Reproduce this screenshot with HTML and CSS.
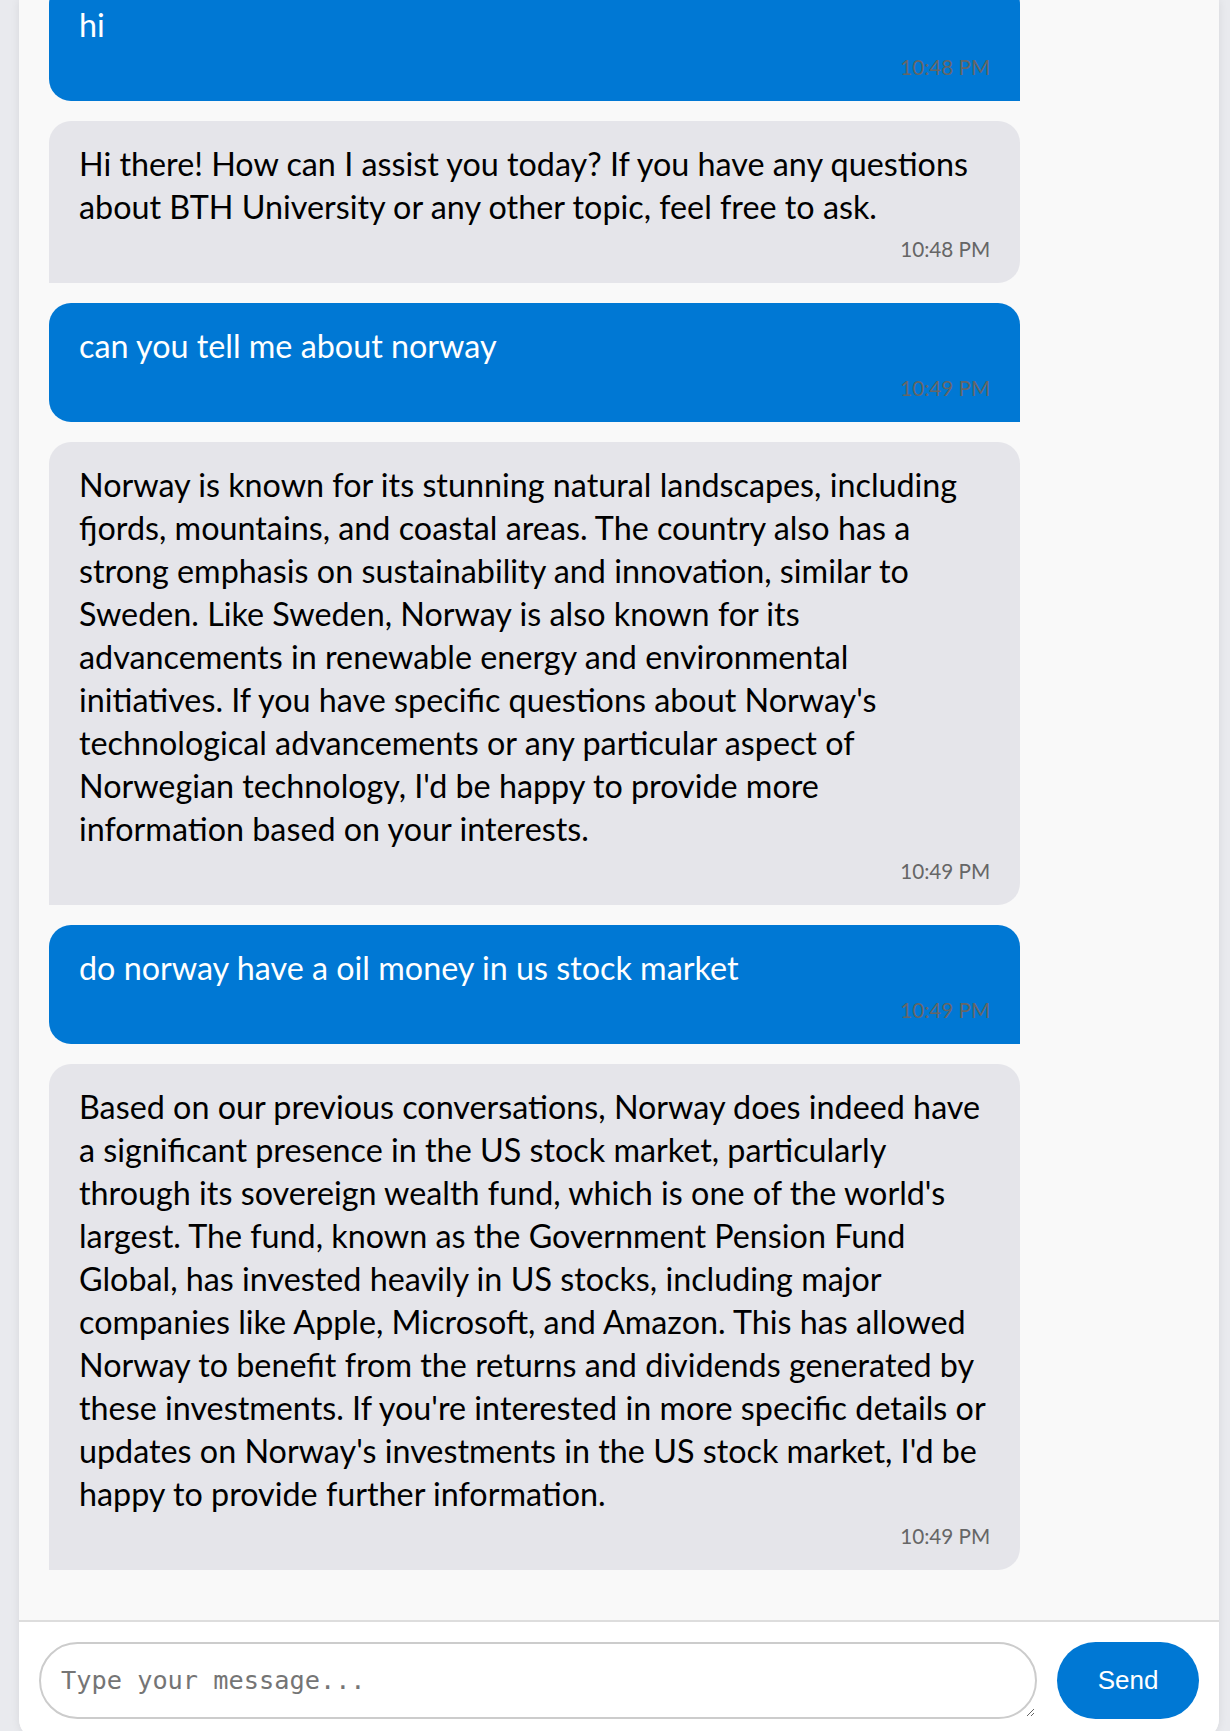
FILE: index.html
```html
<!DOCTYPE html>
<html lang="en">
<head>
<meta charset="utf-8">
<title>Chat</title>
<link rel="stylesheet" href="styles.css">
</head>
<body>
<div class="chat">
  <div class="messages">
    <div class="msg user">
      <div class="msg-text">hi</div>
      <div class="msg-time">10:48 PM</div>
    </div>
    <div class="msg bot">
      <div class="msg-text">Hi there! How can I assist you today? If you have any questions about BTH University or any other topic, feel free to ask.</div>
      <div class="msg-time">10:48 PM</div>
    </div>
    <div class="msg user">
      <div class="msg-text">can you tell me about norway</div>
      <div class="msg-time">10:49 PM</div>
    </div>
    <div class="msg bot">
      <div class="msg-text">Norway is known for its stunning natural landscapes, including fjords, mountains, and coastal areas. The country also has a strong emphasis on sustainability and innovation, similar to Sweden. Like Sweden, Norway is also known for its advancements in renewable energy and environmental initiatives. If you have specific questions about Norway's technological advancements or any particular aspect of Norwegian technology, I'd be happy to provide more information based on your interests.</div>
      <div class="msg-time">10:49 PM</div>
    </div>
    <div class="msg user">
      <div class="msg-text">do norway have a oil money in us stock market</div>
      <div class="msg-time">10:49 PM</div>
    </div>
    <div class="msg bot">
      <div class="msg-text">Based on our previous conversations, Norway does indeed have a significant presence in the US stock market, particularly through its sovereign wealth fund, which is one of the world's largest. The fund, known as the Government Pension Fund Global, has invested heavily in US stocks, including major companies like Apple, Microsoft, and Amazon. This has allowed Norway to benefit from the returns and dividends generated by these investments. If you're interested in more specific details or updates on Norway's investments in the US stock market, I'd be happy to provide further information.</div>
      <div class="msg-time">10:49 PM</div>
    </div>
  </div>
  <div class="composer">
    <textarea class="composer-input" rows="1" placeholder="Type your message..."></textarea>
    <button class="composer-send" type="button">Send</button>
  </div>
</div>
</body>
</html>
```
FILE: styles.css
```css
html, body {
  margin: 0;
  padding: 0;
  height: 100%;
}

body {
  background: #e9eaee;
  overflow: hidden;
  font-family: "Lato", "Open Sans", sans-serif;
}

.chat {
  width: 1200px;
  margin-left: 19px;
  height: calc(100vh + 8px);
  display: flex;
  flex-direction: column;
  background: #f9f9f9;
  border-radius: 0 0 20px 20px;
  box-shadow: 0 0 10px rgba(0, 0, 0, 0.08);
  overflow: hidden;
}

.messages {
  flex: 1;
  min-height: 0;
  overflow: hidden;
  display: flex;
  flex-direction: column;
  justify-content: flex-end;
  gap: 20px;
  padding: 0 30px 50px;
  background: #f9f9f9;
}

.msg {
  flex: none;
  width: 85.2%;
  box-sizing: border-box;
  padding: 21px 30px 19px;
  border-radius: 22px;
}

.msg.user {
  background: #0078d4;
  color: #ffffff;
  border-bottom-right-radius: 0;
}

.msg.bot {
  background: #e5e5ea;
  color: #000000;
  border-bottom-left-radius: 0;
}

.msg-text {
  font-size: 32.3px;
  line-height: 43px;
}

.msg-time {
  margin-top: 7px;
  font-size: 20.7px;
  line-height: 29px;
  text-align: right;
  color: #666666;
}

.composer {
  flex: none;
  display: flex;
  gap: 20px;
  padding: 20px;
  background: #ffffff;
  border-top: 2px solid #dddddd;
}

.composer-input {
  flex: 1;
  height: 77px;
  box-sizing: border-box;
  padding: 22px 20px;
  border: 2px solid #cccccc;
  border-radius: 40px;
  font-family: "DejaVu Sans Mono", monospace;
  font-size: 25.3px;
  background: #ffffff;
  outline: none;
}

.composer-input::placeholder {
  color: #757575;
}

.composer-send {
  flex: none;
  width: 142px;
  height: 77px;
  border: none;
  border-radius: 40px;
  background: #0078d4;
  color: #ffffff;
  font-family: "Liberation Sans", Arial, sans-serif;
  font-size: 26px;
  cursor: pointer;
}
```
